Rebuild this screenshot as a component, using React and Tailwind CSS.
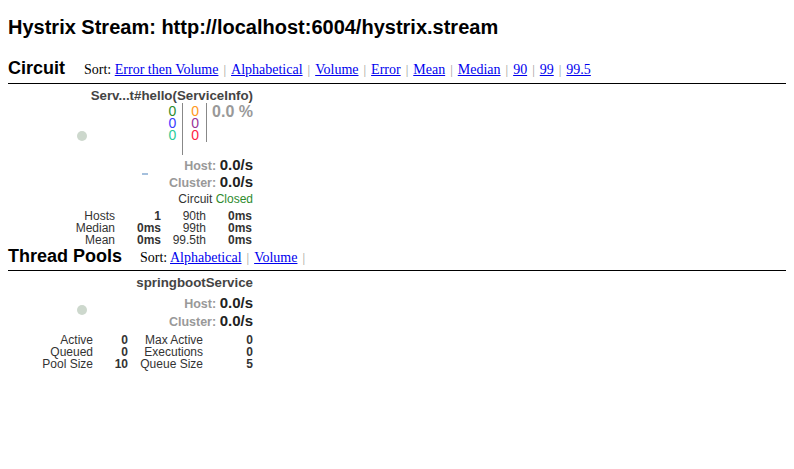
import React from "react";

function Sep() {
  return <span className="text-[#999] mx-[5px] text-[13px]">|</span>;
}

function SortLine({ items, trailing, ml }) {
  return (
    <span className={"font-['Liberation_Serif'] text-[14px] text-black " + ml}>
      Sort:{" "}
      {items.map((it, i) => (
        <React.Fragment key={it}>
          <a href="#" className="text-[#0000ee] underline">{it}</a>
          {i < items.length - 1 ? <Sep /> : null}
        </React.Fragment>
      ))}
      {trailing ? <Sep /> : null}
    </span>
  );
}

function Rate({ label, value, lh }) {
  return (
    <div className={"text-right text-[15px] " + lh}>
      <span className="text-[12.5px] font-bold text-[#999]">{label}:&nbsp;</span>
      <span className="text-[15px] font-bold text-[#222]">{value}</span>
    </div>
  );
}

export default function App() {
  return (
    <div className="font-['Liberation_Sans',Arial,sans-serif] text-black px-[8px] bg-white min-h-[469px]">
      <h1 className="text-[20px] font-bold leading-[24px] pt-[15px]">
        Hystrix Stream: http://localhost:6004/hystrix.stream
      </h1>

      <div className="flex items-baseline mt-[18px] leading-[22px]">
        <span className="text-[18px] font-bold">Circuit</span>
        <SortLine ml="ml-[19px]" items={["Error then Volume", "Alphabetical", "Volume", "Error", "Mean", "Median", "90", "99", "99.5"]} />
      </div>
      <div className="border-b border-black mt-[2px]" />

      {/* Circuit monitor */}
      <div className="relative w-[245px] pt-[4px]">
        <span className="absolute left-[69px] top-[47px] w-[10px] h-[10px] rounded-full bg-[#cdd8cd]" />
        <span className="absolute left-[134px] top-[89px] w-[6px] h-[2px] bg-[#a5c0dd]" />
        <div className="text-right text-[13.3px] font-bold text-[#444] leading-[15px]">
          Serv...t#hello(ServiceInfo)
        </div>
        <div className="flex justify-end text-[14px] leading-[12px]">
          <div className="flex flex-col items-end pr-[6px] pb-[14px] border-r border-[#888] pt-[2px]">
            <span className="text-[#2e8b2e]">0</span>
            <span className="text-[#3c3cff]">0</span>
            <span className="text-[#2ccc99]">0</span>
          </div>
          <div className="self-start flex flex-col items-end pl-[8px] pr-[7px] pb-[1px] border-r border-[#888] pt-[2px]">
            <span className="text-[#ff9922]">0</span>
            <span className="text-[#993399]">0</span>
            <span className="text-[#ff2244]">0</span>
          </div>
          <div className="pl-[5px] text-[16px] font-bold text-[#999] leading-[18px]">0.0 %</div>
        </div>
        <div className="mt-[1px]">
          <Rate label="Host" value="0.0/s" lh="h-[17px] leading-[17px]" />
          <Rate label="Cluster" value="0.0/s" lh="h-[17px] leading-[17px]" />
        </div>
        <div className="text-right text-[12px] leading-[17px] text-[#333] mt-[1px]">
          Circuit <span className="text-[#2e8b2e]">Closed</span>
        </div>
        <div className="grid grid-cols-[107px_46px_45px_46px] text-[12px] leading-[12px] text-[#333] mt-[2px]">
          <span className="text-right">Hosts</span>
          <span className="text-right font-bold">1</span>
          <span className="text-right">90th</span>
          <span className="text-right font-bold">0ms</span>
          <span className="text-right">Median</span>
          <span className="text-right font-bold">0ms</span>
          <span className="text-right">99th</span>
          <span className="text-right font-bold">0ms</span>
          <span className="text-right">Mean</span>
          <span className="text-right font-bold">0ms</span>
          <span className="text-right">99.5th</span>
          <span className="text-right font-bold">0ms</span>
        </div>
      </div>

      <div className="flex items-baseline -mt-[1px] leading-[22px]">
        <span className="text-[18px] font-bold">Thread Pools</span>
        <SortLine ml="ml-[18px]" items={["Alphabetical", "Volume"]} trailing />
      </div>
      <div className="border-b border-black mt-[1px]" />

      {/* Thread pool monitor */}
      <div className="relative w-[245px] pt-[4px]">
        <span className="absolute left-[69px] top-[34px] w-[10px] h-[10px] rounded-full bg-[#cdd8cd]" />
        <div className="text-right text-[13.3px] font-bold text-[#444] leading-[15px]">springbootService</div>
        <div className="mt-[4px]">
          <Rate label="Host" value="0.0/s" lh="h-[18px] leading-[18px]" />
          <Rate label="Cluster" value="0.0/s" lh="h-[18px] leading-[18px]" />
        </div>
        <div className="grid grid-cols-[85px_35px_75px_50px] text-[12px] leading-[12px] text-[#333] mt-[4px]">
          <span className="text-right">Active</span>
          <span className="text-right font-bold">0</span>
          <span className="text-right">Max Active</span>
          <span className="text-right font-bold">0</span>
          <span className="text-right">Queued</span>
          <span className="text-right font-bold">0</span>
          <span className="text-right">Executions</span>
          <span className="text-right font-bold">0</span>
          <span className="text-right">Pool Size</span>
          <span className="text-right font-bold">10</span>
          <span className="text-right">Queue Size</span>
          <span className="text-right font-bold">5</span>
        </div>
      </div>
    </div>
  );
}
